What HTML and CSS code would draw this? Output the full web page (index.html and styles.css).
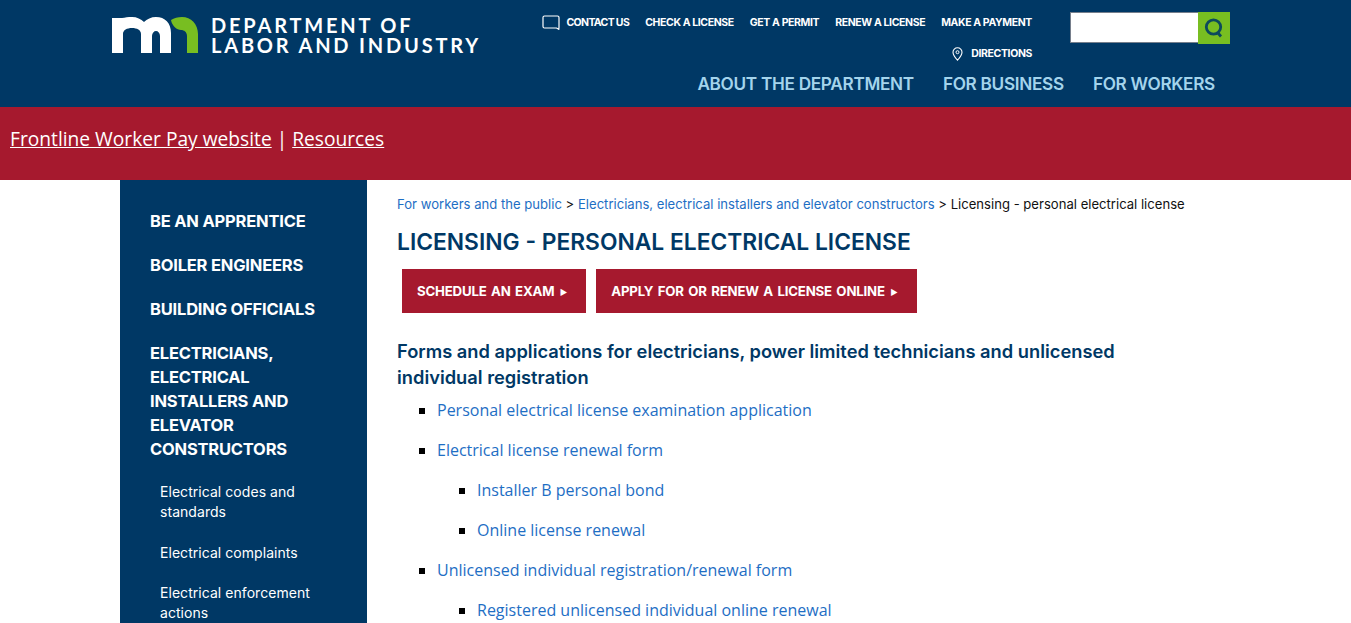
FILE: index.html
```html
<!DOCTYPE html>
<html lang="en">
<head>
  <meta charset="UTF-8" />
  <meta name="viewport" content="width=device-width, initial-scale=1.0"/>
  <title>Licensing - personal electrical license</title>
  <link rel="stylesheet" href="styles.css">
</head>
<body>
  <header class="header">
    <a class="logo" href="#">
      <svg class="logo-mark" viewBox="0 0 86 36" width="86" height="36" aria-hidden="true">
        <path fill="#fff" d="M0 1H10C13 .5 16 0 20 0C25 0 29 2 32 5C35 2 39 0 44 0C53 0 59 6 59 16V36H48V19C48 16 46 14 44 14C42 14 40 16 40 19V36H29V17C29 13 25 11 20 11C15 11 11 13 11 17V36H0Z"/>
        <path fill="#78be21" d="M59 3C62 1 66 0 70 0C79 0 86 7 86 17V36H75V19C75 15 72 13 69 13C65 13 60 9 59 3Z"/>
      </svg>
      <span class="logo-text">DEPARTMENT OF<br>LABOR AND INDUSTRY</span>
    </a>
    <div class="header-right">
      <div class="header-top">
        <nav class="util-nav">
          <div class="util-row">
            <a href="#" class="util-contact">
              <svg width="18" height="15" viewBox="0 0 18 15" aria-hidden="true"><path fill="none" stroke="#fff" stroke-width="1.2" d="M2.500 1h13c.8 0 1.500.7 1.500 1.500v9.800l-.2 2-2.300-1.300H2.500c-.8 0-1.500-.7-1.500-1.500v-9c0-.8.7-1.500 1.500-1.500z"/></svg>
              CONTACT US</a>
            <a href="#">CHECK A LICENSE</a>
            <a href="#">GET A PERMIT</a>
            <a href="#">RENEW A LICENSE</a>
            <a href="#">MAKE A PAYMENT</a>
          </div>
          <div class="util-row">
            <a href="#" class="util-directions">
              <svg width="11" height="14" viewBox="0 0 11 14" aria-hidden="true"><path fill="none" stroke="#fff" stroke-width="1.1" d="M5.500.8C3 .8 1 2.800 1 5.200c0 3 4.500 8 4.500 8s4.500-5 4.500-8C10 2.800 8 .8 5.500.8z"/><circle cx="5.500" cy="5.200" r="1.500" fill="none" stroke="#fff"/></svg>
              DIRECTIONS</a>
          </div>
        </nav>
        <form class="search">
          <input class="search-input" type="text" aria-label="Search">
          <button class="search-btn" type="button" aria-label="Search">
            <svg width="22" height="22" viewBox="0 0 22 22" aria-hidden="true"><circle cx="10.500" cy="10" r="7.200" fill="none" stroke="#0c4a5c" stroke-width="2.800"/><path stroke="#0c4a5c" stroke-width="2.800" d="M14.500 15.500l3.500 4"/></svg>
          </button>
        </form>
      </div>
      <nav class="main-nav">
        <a href="#">ABOUT THE DEPARTMENT</a>
        <a href="#">FOR BUSINESS</a>
        <a href="#">FOR WORKERS</a>
      </nav>
    </div>
  </header>

  <div class="banner">
    <a href="#">Frontline Worker Pay website</a> | <a href="#">Resources</a>
  </div>

  <div class="page">
    <aside class="sidebar">
      <ul class="side-top">
        <li><a href="#">BE AN APPRENTICE</a></li>
        <li><a href="#">BOILER ENGINEERS</a></li>
        <li><a href="#">BUILDING OFFICIALS</a></li>
        <li><a href="#">ELECTRICIANS, ELECTRICAL INSTALLERS AND ELEVATOR CONSTRUCTORS</a>
          <ul class="side-sub">
            <li><a href="#">Electrical codes and standards</a></li>
            <li><a href="#">Electrical complaints</a></li>
            <li><a href="#">Electrical enforcement actions</a></li>
          </ul>
        </li>
      </ul>
    </aside>
    <main class="content">
      <p class="crumbs"><a href="#">For workers and the public</a> &gt; <a href="#">Electricians, electrical installers and elevator constructors</a> &gt; Licensing - personal electrical license</p>
      <h1 class="title">LICENSING - PERSONAL ELECTRICAL LICENSE</h1>
      <div class="actions">
        <a class="btn" href="#">SCHEDULE AN EXAM <span class="arrow">&#9658;</span></a>
        <a class="btn" href="#">APPLY FOR OR RENEW A LICENSE ONLINE <span class="arrow">&#9658;</span></a>
      </div>
      <h2 class="subtitle">Forms and applications for electricians, power limited technicians and unlicensed individual registration</h2>
      <ul class="links">
        <li><a href="#">Personal electrical license examination application</a></li>
        <li><a href="#">Electrical license renewal form</a>
          <ul>
            <li><a href="#">Installer B personal bond</a></li>
            <li><a href="#">Online license renewal</a></li>
          </ul>
        </li>
        <li><a href="#">Unlicensed individual registration/renewal form</a>
          <ul>
            <li><a href="#">Registered unlicensed individual online renewal</a></li>
          </ul>
        </li>
      </ul>
    </main>
  </div>
</body>
</html>
```

FILE: styles.css
```css
html, body {
  height: 100%;
}

body {
  margin: 0;
  overflow: hidden;
  background: #fff;
  font-family: 'Open Sans', Arial, sans-serif;
}

a {
  color: inherit;
  text-decoration: none;
}

ul {
  margin: 0;
  padding: 0;
}

/* Header */
.header {
  height: 107px;
  box-sizing: border-box;
  background: #003865;
  display: flex;
  justify-content: space-between;
  padding: 7px 121px 0 112px;
}

.logo {
  display: flex;
  align-items: flex-start;
  gap: 13px;
  padding-top: 10px;
  color: #fff;
}

.logo-text {
  font-family: 'Lato', sans-serif;
  font-weight: 700;
  font-size: 20px;
  line-height: 20px;
  letter-spacing: 2.800px;
  margin-top: -2px;
}

.header-right {
  display: flex;
  flex-direction: column;
  align-items: flex-end;
}

.header-top {
  display: flex;
  gap: 38px;
}

.util-row {
  display: flex;
  justify-content: flex-end;
  gap: 16px;
  height: 31px;
  align-items: center;
  color: #fff;
  font-family: 'Inter', sans-serif;
  font-size: 10.500px;
  font-weight: 700;
  letter-spacing: -0.38px;
}

.util-contact {
  display: flex;
  align-items: center;
  gap: 6px;
  letter-spacing: -0.65px;
}

.util-directions {
  display: flex;
  align-items: center;
  gap: 8px;
}

.search {
  display: flex;
  height: 32px;
  margin-top: 5px;
}

.search-input {
  width: 128px;
  height: 31px;
  box-sizing: border-box;
  border: 1px solid #767f8c;
  border-right: 0;
  background: #fff;
  padding: 0;
  margin: 0;
}

.search-btn {
  width: 32px;
  height: 32px;
  border: 0;
  padding: 0;
  background: #78be21;
  display: flex;
  align-items: center;
  justify-content: center;
}

.main-nav {
  display: flex;
  gap: 29px;
  margin-top: 4px;
  margin-right: 15px;
  font-family: 'Inter', sans-serif;
  font-size: 17.200px;
  font-weight: 600;
  letter-spacing: -0.3px;
  color: #a4d4ec;
}

/* Banner */
.banner {
  height: 73px;
  box-sizing: border-box;
  background: #a6192e;
  padding: 18px 10px 0;
  color: #fff;
  font-size: 19.200px;
  line-height: 28px;
}

.banner a {
  text-decoration: underline;
}

/* Page */
.page {
  display: flex;
  padding-left: 120px;
}

.sidebar {
  width: 247px;
  height: 443px;
  flex-shrink: 0;
  box-sizing: border-box;
  background: #003865;
  padding: 29px 30px 0;
  color: #fff;
  font-family: 'Inter', sans-serif;
}

.sidebar li {
  list-style: none;
}

.side-top > li {
  margin-bottom: 20px;
}

.side-top > li > a {
  display: block;
  font-size: 16.500px;
  font-weight: 700;
  line-height: 24px;
  letter-spacing: -0.2px;
}

.side-sub {
  padding: 21px 0 0 10px;
}

.side-sub li {
  margin-bottom: 20.500px;
  font-size: 14px;
  line-height: 20px;
  letter-spacing: 0.05px;
}

.content {
  padding: 15px 0 0 30px;
  width: 790px;
}

.crumbs {
  margin: 0;
  font-family: 'Inter', sans-serif;
  font-size: 13.100px;
  line-height: 18px;
  white-space: nowrap;
  color: #111;
}

.crumbs a {
  color: #1e6ec4;
}

.title {
  margin: 15px 0 0;
  font-family: 'Inter', sans-serif;
  font-size: 22.800px;
  line-height: 28px;
  font-weight: 600;
  color: #003865;
}

.actions {
  display: flex;
  gap: 10px;
  margin: 13px 0 0 5px;
}

.btn {
  height: 44px;
  box-sizing: border-box;
  background: #a6192e;
  color: #fff;
  font-family: 'Inter', sans-serif;
  font-size: 13.250px;
  font-weight: 700;
  letter-spacing: -0.2px;
  word-spacing: 1.500px;
  line-height: 44px;
  padding: 0 19px 0 15px;
}

.arrow {
  font-size: 8px;
  margin-left: 1px;
  vertical-align: 1px;
}

.subtitle {
  margin: 25px 0 0;
  font-family: 'Inter', sans-serif;
  font-size: 18.300px;
  line-height: 26px;
  font-weight: 600;
  color: #003865;
}

.links {
  margin-top: 0;
  padding-left: 40px;
  font-size: 16px;
  line-height: 40px;
  list-style: square;
  color: #000;
}

.links ul {
  padding-left: 40px;
  list-style: square;
}

.links a {
  color: #1e6ec4;
}
```
